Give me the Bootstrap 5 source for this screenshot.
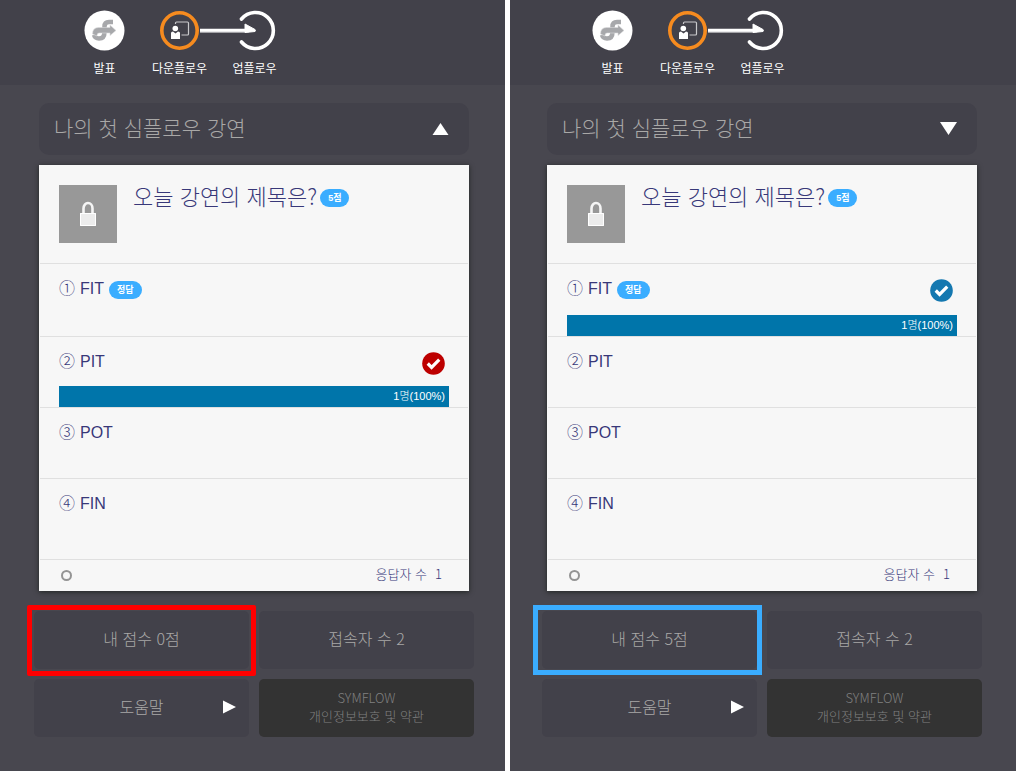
<!DOCTYPE html>
<html lang="ko">
<head>
<meta charset="utf-8">
<meta name="viewport" content="width=device-width, initial-scale=1">
<title>심플로우</title>
<link href="https://cdn.jsdelivr.net/npm/bootstrap@5.3.0/dist/css/bootstrap.min.css" rel="stylesheet">
<style>
  body { font-family: "Liberation Sans", "Noto Sans CJK KR", sans-serif; font-weight: 300; background: #fff; }
  .phone { flex: 1 1 0; min-width: 0; background: #48474f; --edge-start: 39px; --edge-end: 36px; }
  .phone-alt { flex-basis: 1px; --edge-start: 37px; --edge-end: 39px; }
  .divide { width: 5px; background: #fffefe; }
  .flow-head { height: 85px; background: #42414a; padding: 10px 0 0 calc(var(--edge-start) + 28px); }
  .flow-head a { width: 75px; font-size: 12px; line-height: 18px; color: #fff; }
  .flow-head svg { display: block; width: 75px; height: 41px; overflow: visible; margin-bottom: 8px; }
  .main-area { padding: 18px var(--edge-end) 0 var(--edge-start); }
  .talk { background: #42414a; border: 0; border-radius: 10px; height: 52px; padding: 0 20px 0 15px; color: #a9a8a7; font-size: 21px; line-height: 32px; }
  .talk span { padding-bottom: 4px; }
  .sheet { background: #f7f7f7; color: #383879; box-shadow: 0 1px 5px rgba(20,25,20,.75); margin-top: 10px; padding: 0 1px; }
  .quest { height: 99px; padding: 20px 19px 0; border-bottom: 1px solid #e0e0e0; }
  .lock { width: 58px; height: 58px; background: #989898; flex: none; }
  .quest h1 { font-size: 22px; line-height: 20px; margin: 0 3px 0 16px; }
  .tag { background: #3aadff; color: #fff; border-radius: 9px; height: 18px; line-height: 18px; padding: 0 8px; font-size: 9px; font-weight: 700; }
  .choice { height: 71px; padding: 15px 19px 0; border-bottom: 1px solid #e0e0e0; font-size: 16px; line-height: 20px; }
  .choice:first-child { height: 73px; }
  .choice:last-child { height: 81px; }
  .choice .num { font-family: "Noto Sans CJK KR", sans-serif; width: 21px; line-height: 16px; }
  .choice .tag { margin-left: 5px; margin-top: 2px; }
  .choice .row-main { height: 24px; }
  .tally { height: 21px; border-radius: 0; background: transparent; font-size: 11px; line-height: 21px; }
  .tally .progress-bar { background: #0075aa; text-align: right; padding-right: 4px; }
  .sheet-foot { height: 31px; padding: 0 26px 0 21px; font-size: 13px; line-height: 20px; }
  .sheet-foot span { padding-bottom: 4px; }
  .page-dot { width: 11px; height: 11px; border: 2px solid #949494; border-radius: 50%; background: none; }
  .tiles { display: grid; grid-template-columns: 1fr 1fr; gap: 10px; margin: 20px -5px 0; padding-bottom: 34px; }
  .tile { height: 58px; border: 0; border-radius: 5px; background: #42414a; color: #a9a8a7; font-size: 16px; line-height: 24px; padding: 0 6px 4px; }
  .tile-terms { background: #333; color: #808080; font-size: 13px; line-height: 18px; padding-bottom: 2px; }
  .quest h1, .talk, .tile, .sheet-foot { font-family: "Noto Sans CJK KR", sans-serif; font-weight: 300; }
  .flow-head { font-family: "Noto Sans CJK KR", sans-serif; font-weight: 400; }
  .marked::after { content: ""; position: absolute; inset: -6px -7px -7px; border: 5px solid red; border-radius: 2px; }
  .phone-alt .marked::after { inset: -6px -5px -6px -9px; border-color: #3aadff; border-radius: 0; }
  .help-arrow { right: 13px; top: 21px; }
</style>
<script src="https://cdn.jsdelivr.net/npm/bootstrap@5.3.0/dist/js/bootstrap.bundle.min.js"></script>
</head>
<body>
<svg class="d-none">
  <symbol id="i-talk" viewBox="0 0 75 41">
    <circle cx="37.5" cy="20.5" r="20" fill="#fff"/>
    <path d="M46 12H42q-4.500 0-4.500 4.500V22q0 6.500-5.500 6.500-4 0-5-3.500" fill="none" stroke="#a7a8ab" stroke-width="4.500"/>
    <path d="M25.500 24q0-6.500 6-6.500h11.500v-2.500l6 5.500-6 5v-2.500H32q-2 0-2 3z" fill="#a7a8ab" stroke="#dcdcde" stroke-width=".6"/>
  </symbol>
  <symbol id="i-down" viewBox="0 0 75 41">
    <circle cx="37.500" cy="20.500" r="17.700" fill="none" stroke="#f68b1f" stroke-width="3.600"/>
    <path d="M33.500 14v-1q0-1 1-1h11q1 0 1 1v11q0 1-1 1h-6" fill="none" stroke="#c9c9cc" stroke-width="1.200"/>
    <circle cx="33.300" cy="18.500" r="2.800" fill="#fff"/>
    <path d="M29 29v-6q0-1.500 2-1.500l2.500 2 2.500-2q2 0 2 1.500v6z" fill="#fff"/>
  </symbol>
  <symbol id="i-check" viewBox="0 0 24 24">
    <circle cx="12" cy="12" r="11.800" fill="currentColor"/>
    <path d="M6 12l4 4 8-8" fill="none" stroke="#fff" stroke-width="3.400"/>
  </symbol>
  <symbol id="i-lock" viewBox="0 0 18 26">
    <path d="M4.500 12V7.500a4.500 5.500 0 0 1 9 0V12" fill="none" stroke="#f5f5f5" stroke-width="2.600"/>
    <path d="M1 12h16v13H1z" fill="#ececec"/><path d="M1.500 12.500h15v12h-15z" fill="none" stroke="#fff"/>
  </symbol>
  <symbol id="i-up" viewBox="0 0 75 41" overflow="visible">
    <path d="M24.500 9a18 18 0 1 1 0 23" fill="none" stroke="#fff" stroke-width="3.600" stroke-linecap="round"/>
    <path d="M-17 20.500H32" stroke="#fff" stroke-width="3.600"/><path d="M-17 22H28" stroke="#d5d5d8"/>
    <path d="M28 14l10 5.500q1 1 0 2l-10 1z" fill="#fff" stroke="#fff" stroke-linejoin="round"/>
  </symbol>
</svg>
<div class="d-flex min-vh-100">
  <section class="phone">
    <nav class="flow-head d-flex">
      <a href="#" class="text-decoration-none text-center"><svg><use href="#i-talk"/></svg>발표</a>
      <a href="#" class="text-decoration-none text-center"><svg><use href="#i-down"/></svg>다운플로우</a>
      <a href="#" class="text-decoration-none text-center"><svg><use href="#i-up"/></svg>업플로우</a>
    </nav>
    <main class="main-area">
      <button class="talk w-100 d-flex align-items-center justify-content-between text-start"><span>나의 첫 심플로우 강연</span><svg width="17" height="12"><path d="M8.500 0L16.500 12H.5z" fill="#fff"/></svg></button>
      <article class="sheet">
        <header class="quest d-flex align-items-start">
          <div class="lock d-flex align-items-center justify-content-center"><svg width="18" height="26"><use href="#i-lock"/></svg></div>
          <h1>오늘 강연의 제목은?</h1><span class="tag mt-1">5점</span>
        </header>
        <ol class="list-unstyled mb-0">
          <li class="choice"><div class="row-main d-flex"><span class="num">①</span>FIT<span class="tag">정답</span></div></li>
          <li class="choice d-flex flex-column justify-content-between"><div class="row-main d-flex"><span class="num">②</span>PIT<svg class="ms-auto me-1" width="23" height="23" color="#bd0000"><use href="#i-check"/></svg></div><div class="progress tally"><div class="progress-bar w-100">1명(100%)</div></div></li>
          <li class="choice"><div class="row-main d-flex"><span class="num">③</span>POT</div></li>
          <li class="choice"><div class="row-main d-flex"><span class="num">④</span>FIN</div></li>
        </ol>
        <footer class="sheet-foot d-flex align-items-center"><button class="page-dot p-0" aria-label="1"></button><span class="ms-auto">응답자 수</span><span class="ms-2">1</span></footer>
      </article>
      <div class="tiles">
        <button class="tile marked position-relative">내 점수 0점</button>
        <button class="tile">접속자 수 2</button>
        <button class="tile position-relative">도움말<svg class="help-arrow position-absolute" width="13" height="14"><path d="M0 0.500L13 7 0 13.500z" fill="#fff"/></svg></button>
        <button class="tile tile-terms">SYMFLOW<br>개인정보보호 및 약관</button>
      </div>
    </main>
  </section>
  <div class="divide"></div>
  <section class="phone phone-alt">
    <nav class="flow-head d-flex">
      <a href="#" class="text-decoration-none text-center"><svg><use href="#i-talk"/></svg>발표</a>
      <a href="#" class="text-decoration-none text-center"><svg><use href="#i-down"/></svg>다운플로우</a>
      <a href="#" class="text-decoration-none text-center"><svg><use href="#i-up"/></svg>업플로우</a>
    </nav>
    <main class="main-area">
      <button class="talk w-100 d-flex align-items-center justify-content-between text-start"><span>나의 첫 심플로우 강연</span><svg width="17" height="14"><path d="M0 0H17L8.500 13z" fill="#fff"/></svg></button>
      <article class="sheet">
        <header class="quest d-flex align-items-start">
          <div class="lock d-flex align-items-center justify-content-center"><svg width="18" height="26"><use href="#i-lock"/></svg></div>
          <h1>오늘 강연의 제목은?</h1><span class="tag mt-1">5점</span>
        </header>
        <ol class="list-unstyled mb-0">
          <li class="choice d-flex flex-column justify-content-between"><div class="row-main d-flex"><span class="num">①</span>FIT<span class="tag">정답</span><svg class="ms-auto me-1" width="23" height="23" color="#1478b0"><use href="#i-check"/></svg></div><div class="progress tally"><div class="progress-bar w-100">1명(100%)</div></div></li>
          <li class="choice"><div class="row-main d-flex"><span class="num">②</span>PIT</div></li>
          <li class="choice"><div class="row-main d-flex"><span class="num">③</span>POT</div></li>
          <li class="choice"><div class="row-main d-flex"><span class="num">④</span>FIN</div></li>
        </ol>
        <footer class="sheet-foot d-flex align-items-center"><button class="page-dot p-0" aria-label="1"></button><span class="ms-auto">응답자 수</span><span class="ms-2">1</span></footer>
      </article>
      <div class="tiles">
        <button class="tile marked position-relative">내 점수 5점</button>
        <button class="tile">접속자 수 2</button>
        <button class="tile position-relative">도움말<svg class="help-arrow position-absolute" width="13" height="14"><path d="M0 0.500L13 7 0 13.500z" fill="#fff"/></svg></button>
        <button class="tile tile-terms">SYMFLOW<br>개인정보보호 및 약관</button>
      </div>
    </main>
  </section>
</div>
</body>
</html>
